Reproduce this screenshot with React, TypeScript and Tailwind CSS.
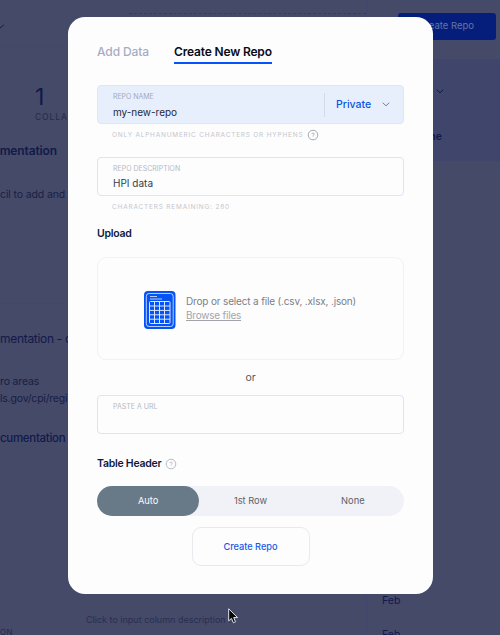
function Chevron({ className }: { className: string }) {
  return (
    <svg viewBox="0 0 8 5" fill="none" stroke="currentColor" strokeWidth="1" strokeLinecap="round" strokeLinejoin="round" className={className}>
      <path d="M1 1l3 2.8L7 1" />
    </svg>
  );
}

function HelpIcon({ className }: { className: string }) {
  return (
    <svg viewBox="0 0 12 12" fill="none" stroke="currentColor" className={className}>
      <circle cx="6" cy="6" r="4.8" strokeWidth="0.9" />
      <path d="M4.9 5.1c0-1.5 2.3-1.4 2.3 0 0 .8-1.1.8-1.1 1.6M6.1 7.4v.6" strokeWidth="0.8" />
    </svg>
  );
}

function SheetIcon() {
  return (
    <svg viewBox="0 0 32 38" className="h-[38px] w-8 shrink-0" fill="none">
      <rect x="0" y="0" width="31.5" height="38" rx="4" fill="#0552f5" />
      <rect x="2.3" y="2.5" width="26.9" height="33" rx="2.8" stroke="#c9dcff" strokeWidth="0.9" />
      <path d="M6 5.5h7M6 8h12" stroke="#c9dcff" strokeWidth="0.9" />
      <rect x="5.5" y="10.5" width="20.5" height="22" rx="1" stroke="#dce8ff" strokeWidth="1" />
      <path d="M10.5 10.5v22M15.5 10.5v22M20.5 10.5v22M5.5 15h20.5M5.5 19.4h20.5M5.5 23.8h20.5M5.5 28.2h20.5" stroke="#dce8ff" strokeWidth="1" />
    </svg>
  );
}

function Backdrop() {
  return (
    <div className="flex h-[635px] w-[500px] overflow-hidden bg-[#454a69] whitespace-nowrap text-[#111949]">
      <div className="flex w-[367px] shrink-0 flex-col overflow-hidden border-r border-[#41466a]">
        <div className="flex h-[47px] shrink-0 border-b border-[#434869]">
          <svg viewBox="0 0 5 5" className="mt-6 h-[5px] w-[5px]" fill="none" stroke="#161d45">
            <path d="M0 4L4 .8" />
          </svg>
          <div className="mt-[13px] ml-[124px] w-[238px] border-t border-dashed border-[#343d70]" />
        </div>
        <div className="flex h-[85px] shrink-0 flex-col pt-[36px] pl-[35px]">
          <div className="h-7 text-[23px] leading-7">1</div>
          <div className="h-3 text-[8.5px] leading-3 tracking-[0.9px] text-[#25294c]">COLLA</div>
        </div>
        <div className="mt-[9px] flex h-5 w-[57px] shrink-0 items-center justify-end text-[12px] font-semibold tracking-[-0.12px]">mentation</div>
        <div className="mt-[24px] h-5 shrink-0 text-[10.5px] leading-5 tracking-[-0.12px] text-[#1b2043]">cil to add and e</div>
        <div className="mt-[98px] h-[26px] shrink-0 border-t border-[#434868]" />
        <div className="h-5 shrink-0 text-[12px] leading-5 tracking-[-0.3px]">mentation - d</div>
        <div className="mt-[24px] h-[17px] shrink-0 text-[10.5px] leading-[17px] tracking-[-0.15px] text-[#181d43]">ro areas</div>
        <div className="h-[17px] shrink-0 text-[10.5px] leading-[17px] tracking-[-0.2px] text-[#181d43]">ls.gov/cpi/regi</div>
        <div className="mt-[22px] flex h-5 w-[66px] shrink-0 items-center text-[11.5px] font-medium tracking-[-0.3px]">cumentation</div>
        <div className="mt-[163px] h-[15px] shrink-0 pl-[86px] text-[9px] leading-[15px] text-[#292e51]">Click to input column description ...</div>
        <div className="h-[11px] shrink-0 text-[8px] leading-[11px] tracking-[0.5px] text-[#25294c]">ON</div>
      </div>
      <div className="flex w-[133px] shrink-0 flex-col">
        <div className="flex h-[59px] shrink-0 justify-end pt-[13px] pr-1">
          <div className="flex h-[27px] w-[98px] items-center justify-end rounded-[3px] bg-[#061e7b] pr-[22px] text-[9.5px] text-[#6574a4]">Create Repo</div>
        </div>
        <div className="h-[102px] shrink-0 bg-[#40466b]">
          <Chevron className="mt-[30px] ml-[69px] h-[5px] w-2 text-[#10194b]" />
          <div className="mt-[33px] w-[75px] text-right text-[10.5px] leading-5 font-semibold">Name</div>
        </div>
        <div className="mt-[430px] flex shrink-0 flex-col gap-[14px] pl-[15px] text-[10.5px] leading-5">
          <div>Feb</div>
          <div>Feb</div>
        </div>
      </div>
    </div>
  );
}

export default function App() {
  return (
    <div className="relative h-[635px] w-[500px] overflow-hidden font-['Inter',sans-serif]">
      <Backdrop />
      <main className="absolute top-[17px] left-[68px] flex h-[577px] w-[365px] flex-col rounded-[17px] bg-[#fdfdfe] px-[29px] whitespace-nowrap">
        <nav className="mt-[26px] flex h-[21px] shrink-0 gap-[25px] text-[12px] leading-[18px]">
          <button className="flex w-[52px] font-medium tracking-[-0.1px] text-[#a7acc3]">Add Data</button>
          <button className="flex w-[98px] border-b-2 border-[#0753fb] font-semibold tracking-[-0.17px] text-[#090b19]">Create New Repo</button>
        </nav>
        <div className="mt-[21px] flex h-[39px] shrink-0 items-center rounded-[4px] border border-[#dce7fa] bg-[#e7effc] pl-[15px]">
          <div className="flex h-full w-[211px] flex-col pt-[4px]">
            <span className="text-[7px] leading-[13px] tracking-[-0.05px] text-[#a3aabf]">REPO NAME</span>
            <span className="text-[10px] leading-[18px] tracking-[-0.03px] text-[#25283a]">my-new-repo</span>
          </div>
          <div className="h-6 w-px bg-[#d0dbed]" />
          <span className="ml-[11px] w-[46px] text-[10.5px] font-medium text-[#0b52e4]">Private</span>
          <Chevron className="h-[5px] w-2 text-[#7182a7]" />
        </div>
        <div className="mt-[5px] flex h-[13px] shrink-0 items-center gap-[4px] pl-[15px] text-[6.5px] tracking-[0.78px] text-[#c4c6cc]">
          ONLY ALPHANUMERIC CHARACTERS OR HYPHENS
          <HelpIcon className="-mt-px h-3 w-3 text-[#9b9fa9]" />
        </div>
        <div className="mt-[15px] flex h-[39px] shrink-0 flex-col rounded-[4px] border border-[#dae4fa] pt-[4px] pl-[15px]">
          <span className="text-[7px] leading-[13px] text-[#b6b9c2]">REPO DESCRIPTION</span>
          <span className="text-[10px] leading-[17px] text-[#353b50]">HPI data</span>
        </div>
        <div className="mt-[5px] h-3 shrink-0 pl-[15px] text-[6.5px] leading-3 tracking-[0.8px] text-[#c4c6cc]">CHARACTERS REMAINING: 280</div>
        <h2 className="mt-[11px] h-5 shrink-0 text-[10.5px] leading-5 font-semibold tracking-[-0.25px] text-[#10183f]">Upload</h2>
        <div className="mt-[13px] flex h-[103px] shrink-0 items-center gap-[10px] rounded-[9px] border border-[#f1f2f5] pt-[2px] pl-[46px]">
          <SheetIcon />
          <div className="-mt-[3px] text-[10px] leading-[14px]">
            <div className="tracking-[-0.16px] text-[#7c7e86]">Drop or select a file (.csv, .xlsx, .json)</div>
            <a className="tracking-[-0.22px] text-[#a3a4aa] underline">Browse files</a>
          </div>
        </div>
        <div className="mt-[8px] h-5 shrink-0 text-center text-[10.5px] leading-5 text-[#55575f]">or</div>
        <div className="mt-[7px] h-[39px] shrink-0 rounded-[4px] border border-[#dae4fa] pt-[4px] pl-[15px] text-[7px] leading-[13px] text-[#b6b9c2]">PASTE A URL</div>
        <h2 className="mt-[20px] flex h-5 shrink-0 items-center gap-[4px] text-[10.5px] leading-5 font-semibold tracking-[-0.25px] text-[#10183f]">
          Table Header
          <HelpIcon className="h-3 w-3 text-[#b1b3ba]" />
        </h2>
        <div className="mt-[12px] grid h-[30px] shrink-0 grid-cols-3 rounded-full bg-[#f0f2f7] text-[9.3px] text-[#606269]">
          <button className="rounded-full bg-[#687987] pb-px text-[#f9fbfd]">Auto</button>
          <button className="pb-px">1st Row</button>
          <button className="pb-px">None</button>
        </div>
        <button className="mt-[11px] h-[39px] w-[118px] shrink-0 self-center rounded-[9px] border border-[#e8eaed] text-[9.2px] font-medium text-[#1559e6]">Create Repo</button>
      </main>
      <svg viewBox="0 0 11 16" className="absolute top-[608px] left-[228px] h-4 w-[11px]">
        <path d="M.7.8v12.1l2.8-2.5 1.8 4.4 2.2-1-1.8-4.2h3.9z" fill="#080808" stroke="#e3e4ea" strokeWidth="1" />
      </svg>
    </div>
  );
}
